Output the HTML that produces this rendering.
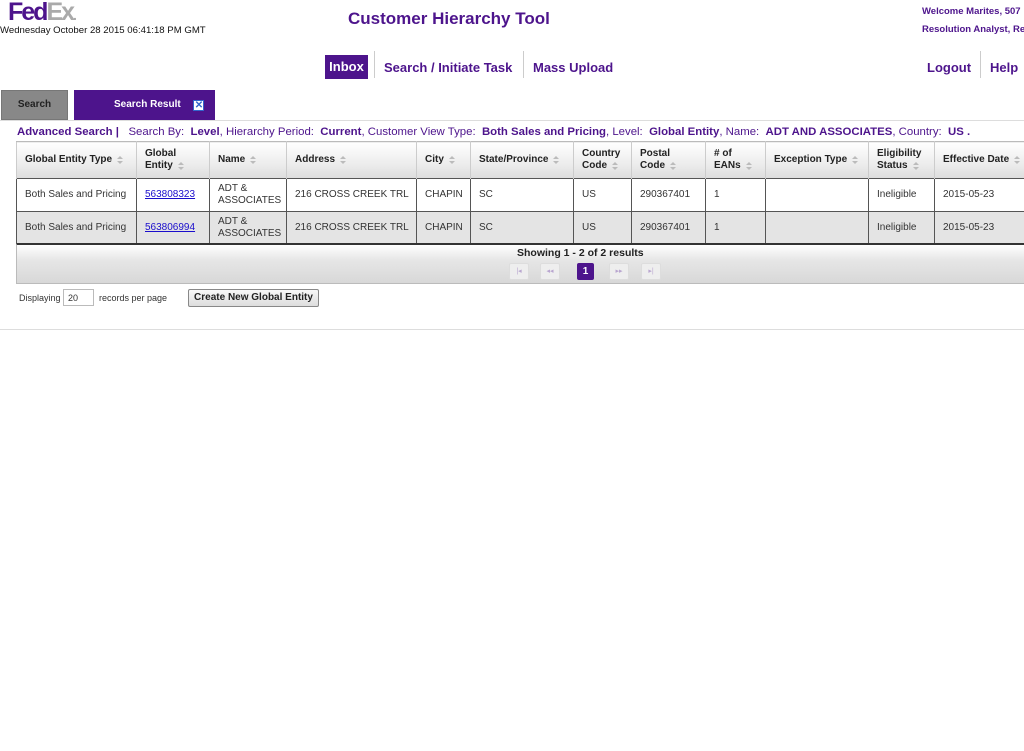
<!DOCTYPE html>
<html><head><style>
*{margin:0;padding:0;box-sizing:border-box}
body{width:1024px;height:751px;background:#fff;font-family:"Liberation Sans",Arial,sans-serif;position:relative;overflow:hidden;color:#222}
.a{position:absolute;white-space:nowrap}
.p{color:#4d148c}
table{position:absolute;left:16px;top:141px;border-collapse:collapse;font-size:10px;table-layout:fixed;width:1010px}
th{height:37px;background:linear-gradient(#fff,#ececec 60%,#ddd);text-align:left;font-weight:bold;padding:0 8px;border-left:1px solid #ccc;border-right:1px solid #ccc;color:#222;line-height:12px;border-top:1px solid #bbb;white-space:nowrap}
td{padding:0 8px;border:1px solid #555;line-height:12px;color:#333;white-space:nowrap}
tr.r1 td{height:33px;background:#fff}
tr.r2 td{height:32px;background:#e4e4e4}
.s{display:inline-block;width:7px;height:10px;vertical-align:-3px;margin-left:5px;position:relative}
.s:before{content:"";position:absolute;left:0;top:1px;border:3.5px solid transparent;border-bottom:3px solid #bbb;border-top:0}
.s:after{content:"";position:absolute;left:0;top:6px;border:3.5px solid transparent;border-top:3px solid #bbb;border-bottom:0}
a{color:#1a0dcc;text-decoration:underline}
.pg{position:absolute;top:263px;width:20px;height:17px;border:1px solid #ddd;background:#eee;border-radius:2px;color:#b9a6d0;font-size:7px;text-align:center;line-height:15px}
</style></head><body>
<div class="a" style="left:8px;top:-2px;font-size:25px;font-weight:bold;letter-spacing:-2px"><span class="p">Fed</span><span style="color:#aaa">Ex</span><span style="color:#aaa;font-size:14px">.</span></div>
<div class="a" style="left:0;top:25px;font-size:9.6px;color:#111">Wednesday October 28 2015 06:41:18 PM GMT</div>
<div class="a p" style="left:348px;top:9px;font-size:17px;font-weight:bold">Customer Hierarchy Tool</div>
<div class="a p" style="left:922px;top:6px;font-size:9.5px;font-weight:bold">Welcome Marites, 507</div>
<div class="a p" style="left:922px;top:24px;font-size:9.5px;font-weight:bold">Resolution Analyst, Re</div>
<div class="a" style="left:325px;top:55px;width:43px;height:24px;background:#4d148c;color:#fff;font-size:13px;font-weight:bold;text-align:center;line-height:24px">Inbox</div>
<div class="a" style="left:374px;top:51px;width:1px;height:27px;background:#ccc"></div>
<div class="a p" style="left:384px;top:60px;font-size:13px;font-weight:bold">Search / Initiate Task</div>
<div class="a" style="left:523px;top:51px;width:1px;height:27px;background:#ccc"></div>
<div class="a p" style="left:533px;top:60px;font-size:13px;font-weight:bold">Mass Upload</div>
<div class="a p" style="left:927px;top:60px;font-size:13px;font-weight:bold">Logout</div>
<div class="a" style="left:980px;top:51px;width:1px;height:27px;background:#ccc"></div>
<div class="a p" style="left:990px;top:60px;font-size:13px;font-weight:bold">Help</div>
<div class="a" style="left:1px;top:90px;width:67px;height:30px;background:#888;border:1px solid #777;font-size:10px;font-weight:bold;text-align:center;line-height:27px;color:#222">Search</div>
<div class="a" style="left:74px;top:90px;width:141px;height:30px;background:#4d148c;font-size:10px;font-weight:bold;color:#fff;line-height:30px;padding-left:40px">Search Result <span style="display:inline-block;width:11px;height:11px;background:#fff;border:1px solid #36c;color:#36c;font-size:10px;line-height:9px;text-align:center;margin-left:10px;vertical-align:-1px">✕</span></div>
<div class="a" style="left:0;top:120px;width:1024px;height:1px;background:#ddd"></div>
<div class="a p" style="left:17px;top:126px;font-size:11.4px"><b>Advanced Search |</b>&nbsp;&nbsp; Search By: &nbsp;<b>Level</b>, Hierarchy Period: &nbsp;<b>Current</b>, Customer View Type: &nbsp;<b>Both Sales and Pricing</b>, Level: &nbsp;<b>Global Entity</b>, Name: &nbsp;<b>ADT AND ASSOCIATES</b>, Country: &nbsp;<b>US .</b></div>
<table>
<colgroup><col style="width:120px"><col style="width:73px"><col style="width:77px"><col style="width:130px"><col style="width:54px"><col style="width:103px"><col style="width:58px"><col style="width:74px"><col style="width:60px"><col style="width:103px"><col style="width:66px"><col style="width:92px"></colgroup>
<tr><th>Global Entity Type<span class="s"></span></th><th>Global<br>Entity<span class="s"></span></th><th>Name<span class="s"></span></th><th>Address<span class="s"></span></th><th>City<span class="s"></span></th><th>State/Province<span class="s"></span></th><th>Country<br>Code<span class="s"></span></th><th>Postal<br>Code<span class="s"></span></th><th># of<br>EANs<span class="s"></span></th><th>Exception Type<span class="s"></span></th><th>Eligibility<br>Status<span class="s"></span></th><th>Effective Date<span class="s"></span></th></tr>
<tr class="r1"><td>Both Sales and Pricing</td><td><a>563808323</a></td><td>ADT &amp;<br>ASSOCIATES</td><td>216 CROSS CREEK TRL</td><td>CHAPIN</td><td>SC</td><td>US</td><td>290367401</td><td>1</td><td></td><td>Ineligible</td><td>2015-05-23</td></tr>
<tr class="r2"><td>Both Sales and Pricing</td><td><a>563806994</a></td><td>ADT &amp;<br>ASSOCIATES</td><td>216 CROSS CREEK TRL</td><td>CHAPIN</td><td>SC</td><td>US</td><td>290367401</td><td>1</td><td></td><td>Ineligible</td><td>2015-05-23</td></tr>
</table>
<div class="a" style="left:16px;top:243px;width:1010px;height:41px;background:linear-gradient(#fff,#e6e6e6 40%,#d8d8d8);border:1px solid #bbb;border-top:2px solid #333"></div>
<div class="a" style="left:517px;top:247px;font-size:10.5px;font-weight:bold;color:#222">Showing 1 - 2 of 2 results</div>
<div class="pg" style="left:509px">|◂</div><div class="pg" style="left:540px">◂◂</div>
<div class="a" style="left:577px;top:263px;width:17px;height:17px;background:#4d148c;color:#fff;font-size:10px;font-weight:bold;text-align:center;line-height:17px;border-radius:2px">1</div>
<div class="pg" style="left:609px">▸▸</div><div class="pg" style="left:641px">▸|</div>
<div class="a" style="left:19px;top:293px;font-size:9px;color:#333">Displaying</div>
<div class="a" style="left:63px;top:289px;width:31px;height:17px;border:1px solid #bbb;font-size:9px;padding:3px 4px;color:#333">20</div>
<div class="a" style="left:99px;top:293px;font-size:9px;color:#333">records per page</div>
<div class="a" style="left:188px;top:289px;width:131px;height:18px;border:1px solid #888;border-radius:2px;background:linear-gradient(#f8f8f8,#ddd);font-size:10px;font-weight:bold;text-align:center;line-height:16px;color:#222">Create New Global Entity</div>
<div class="a" style="left:0;top:329px;width:1024px;height:1px;background:#ddd"></div>
</body></html>
